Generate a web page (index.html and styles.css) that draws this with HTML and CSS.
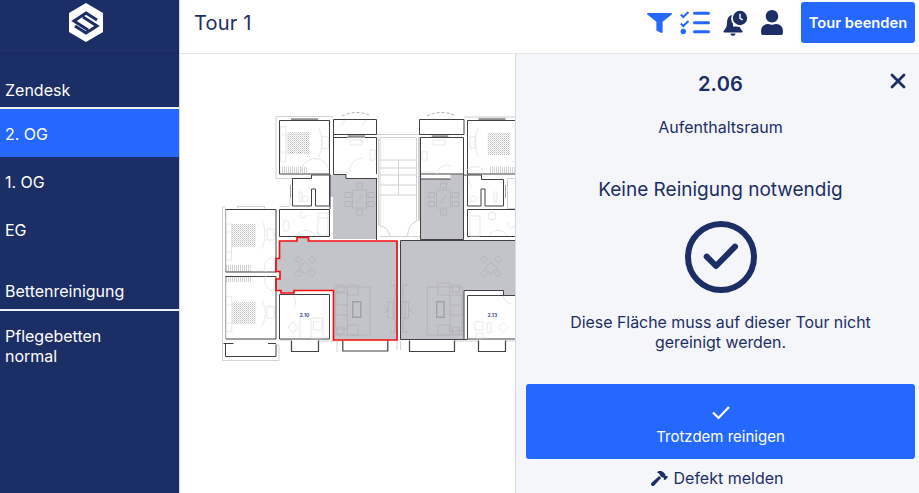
FILE: index.html
```html
<!DOCTYPE html>
<html lang="de">
<head>
<meta charset="utf-8">
<title>Tour 1</title>
<link rel="stylesheet" href="styles.css">
</head>
<body>
<div class="app">
  <aside class="sidebar">
    <div class="logo">
      <svg width="36" height="41" viewBox="0 0 36 41"><polygon fill="#fff" points="18,1 35,11 35,30 18,40 1,30 1,11"/><path fill="none" stroke="#1c2e66" stroke-width="3" d="M29 18 18 11 6 19 20 28M7 24 18 31 29 24 15 15"/></svg>
    </div>
    <div class="group-title">Zendesk</div>
    <div class="item active">2. OG</div>
    <div class="item">1. OG</div>
    <div class="item">EG</div>
    <div class="group-title second">Bettenreinigung</div>
    <div class="item two-line">Pflegebetten normal</div>
  </aside>
  <div class="main">
    <header class="topbar">
      <h1 class="title">Tour 1</h1>
      <div class="actions">
        <svg class="filter" width="25" height="20" viewBox="0 0 512 512" preserveAspectRatio="none"><path d="M487.976 0H24.028C2.710 0-8.047 25.866 7.058 40.971L192 225.941V432c0 7.831 3.821 15.170 10.237 19.662l80 55.980C298.020 518.690 320 507.493 320 487.980V225.941l184.947-184.970C520.021 25.896 509.338 0 487.976 0z"/></svg>
        <svg class="tasks" width="30" height="24" viewBox="0 0 30 24"><path class="ln" d="M.8 3.500 3.300 6 8.500 1M.8 12.500 3.300 15 8.500 10"/><circle class="dot" cx="3.300" cy="20.500" r="2.700"/><path class="bar" d="M14.500 2.300h14M14.500 11.800h14M14.500 20.800h14"/></svg>
        <svg class="bell" width="25" height="26" viewBox="0 0 25 26"><path d="M10 4.500c-4 .8-6 4-6 8 0 4-1 6-3.500 8.500-.5.800 0 1.500 1 1.500h17c1 0 1.500-.7 1-1.500-1.500-1.500-2.400-3-2.900-4.500H10z"/><path d="M7.500 23.500h5c0 1.400-1.100 2.300-2.500 2.300s-2.500-.9-2.500-2.300z"/><circle class="ring" cx="16.500" cy="8.500" r="8.400"/><circle cx="17" cy="8" r="7.200"/><path class="hand" d="M17 3.800v4.500l2.700 1.600"/></svg>
        <svg class="user" width="22" height="25" viewBox="0 0 448 512"><path d="M224 256c70.700 0 128-57.300 128-128S294.700 0 224 0 96 57.300 96 128s57.300 128 128 128zm89.600 32h-16.700c-22.200 10.200-46.900 16-72.900 16s-50.600-5.800-72.900-16h-16.700C60.200 288 0 348.200 0 422.400V464c0 26.500 21.500 48 48 48h352c26.500 0 48-21.500 48-48v-41.600c0-74.200-60.200-134.400-134.400-134.400z"/></svg>
        <button class="end-btn">Tour beenden</button>
      </div>
    </header>
    <div class="content">
      <div class="map">
        <svg class="plan" width="335" height="439" viewBox="180 54 335 439">
          <defs>
            <pattern id="hatch" width="2" height="2" patternUnits="userSpaceOnUse"><rect width="1" height="1" fill="#bdbdc0"/><rect x="1" y="1" width="1" height="1" fill="#dcdcde"/></pattern>
            <pattern id="stripes" width="2" height="4" patternUnits="userSpaceOnUse"><rect width="1" height="4" fill="#d2d2d5"/></pattern>
          </defs>
          <g class="fill-grey">
            <path d="M330 175h16v3h31v61h-44v-42h-3z"/>
            <path d="M420.500 179h30v-4.500h13.500v65h-43.500z"/>
            <path d="M279.500 241h17.500v-3.500h11.500v3.500h88.500v99h-63.500v-49.500h-39.500v2.500h-13v-2.500h-5v-11.500h4v-7.500h-4v-13h3.500z"/>
            <path d="M400.500 240.500h114.500v54.500h-11.500v-4.500h-39.500v49h-63.500z"/>
          </g>
          <g class="beds">
            <rect x="286.700" y="132.300" width="22.600" height="22"/><rect x="231.700" y="224" width="24" height="22.700"/><rect x="232.300" y="302.300" width="23.400" height="22"/><rect x="487.700" y="132.700" width="22.300" height="22.300"/>
          </g>
          <g class="stripes">
            <rect x="280.700" y="166.700" width="26" height="6.600"/><rect x="225.700" y="265" width="25" height="7"/><rect x="226" y="276.500" width="25" height="5.500"/><rect x="490" y="166.700" width="25" height="6.600"/>
          </g>
          <g class="wall-light">
            <path d="M276 178.500v-62h57M276 178.500h17M222.500 207v153.500h56.500v-15.500M222.500 207h3M237.500 206.500h27M279.500 206.500h10M237.500 206.500v2M264.500 206.500v2M290 198v8"/>
            <path d="M377 134.500h43M380 137.500h36.500M380 137.500v88.500M378.500 137.500v88.500M416.500 137.500v84M380 160h36.500M380 168h36.500M380 175h36.500M380 185h36.500M380 195h36.500M398.500 160v35M380 236.500h40M380 226q8 1 10 10M416.500 221q-8 3-9 15"/>
            <path d="M464 117h51M478.500 118h27M507.500 178.500v30M507.500 178.500h7.500M507.500 208.500h7.500"/>
            <path class="dash" d="M342 116q15-7 29 0M427 116q15-7 29 0"/>
            <path d="M337 340v12M387.500 341v10M397 341v9M400.500 341v9M454.500 341h24M505.500 341h9"/>
            <path d="M276 345h3M280 340h11M318.500 341h24"/>
          </g>
          <g class="wall-mid">
            <path d="M225.700 209v63M225.700 276v63M290.500 185v13M505.500 185v13M419 137v84"/>
          </g>
          <g class="bars">
            <path d="M291 119.500h27M478.500 119.500h27M347.700 136.500h17.300M431.700 136.500h16.600"/>
          </g>
          <g class="wall-dark">
            <path d="M279.500 120.500h50v53.500h-50z"/>
            <path d="M333.500 119.500h43v15h-43zM333.500 134.500v40h12.500v4h31M376.500 137.500v36.500M333.500 137.500h14M365 137.500h11.500"/>
            <path d="M292.500 178.500h19v-3.500h18M292.500 178.500v27.500h19v-17h4v17h14v-31"/>
            <path d="M279.500 209.500h50v27h-50zM330 174v35"/>
            <path d="M225.500 209.500h50.500v62.500h-50.500M276 272.500v-1M225.500 276.500h50.500v62.500h-50"/>
            <path d="M223.500 343.500h10M268 343.500h8M225.500 343.500v13h50.500v-12"/>
            <path class="thick" d="M291.500 340.500v11h27v-11M342.800 340.500v10.500h45v-10.500M409.500 340.500v11h45v-11M478.500 340.500v11h27v-11"/>
            <path d="M419.500 119.500h44.500v15h-44.500zM420.500 137.500h43v36.500h-43zM420.500 137.500v41.500h30M463.500 174v65.500M420.500 179v60.500M376.500 178v62"/>
            <path d="M464 175h17.500v4.500h22v26.500h-18.500v-17h-4v17h-13.500v-31"/>
            <path d="M467.500 120.500h47.500M467.500 120.500v53.500h47.500M467.500 209.500h47.500M467.500 209.500v27h47.500"/>
            <path d="M400.500 240.500h114.500M400.500 240.500v99h63.500v-49h39.500v4.500M467.500 295.500h47.500M467.500 295.500v43.500h47.500M464 339.500h3.500"/>
            <path d="M279.500 294.500h50v44.500h-50z"/>
            <path d="M420.500 239.500h43"/>
          </g>
          <path class="red" d="M279.500 241h17.500v-3.500h11.500v3.500h88.500v99h-63.500v-49.500h-39.500v2.500h-13v-2.500h-5v-11.500h4v-7.500h-4v-13h3.500z"/>
          <g class="furn">
            <path d="M280.500 126.700h5.300v35h-5.300zM280.500 135h5.300M280.500 152h5.300M321.700 136.700h6.600v11.600h-6.600zM319 128q6 14 0 29M301 174a11 11 0 0 1 28-3"/>
            <path d="M318 213h10v22h-10zM318 218h10M284 221q-2 5 0 10q5 2 5-5t-5-5zM303 212a3 3 0 1 0 3 3"/>
            <path d="M297 236a10 10 0 0 1 18 0"/>
            <path d="M226.500 224h5v36h-5zM226.500 232h5M226.500 252h5M267 229h7v11h-7zM262 221q6 12 0 28M267 306.700h7v11.600h-7zM262 300q7 14 0 26M226.500 296.700h5.300v35h-5.300zM226.500 305h5.300M226.500 323h5.300"/>
            <path d="M266 272a10 10 0 0 1 8-15M266 276a10 10 0 0 0 8 15"/>
            <path d="M350 140h12v5h-12zM370 150h5v10h-5zM334 172h14M349 172q2-14 14-14M345 120l-3 5M366 120l-3 5"/>
            <path d="M433 140h12v5h-12zM422 151.700h5v8.300h-5zM421 172h14M437 174a10 10 0 0 1 14-8"/>
            <path d="M470 136.700h5v11.600h-5zM478 128q-5 14 0 29M511.700 126.700h3.300v35h-3.300M464.500 173a12 12 0 0 1 19-3"/>
            <path d="M470 199a3 3 0 1 0 6 0a3 3 0 1 0-6 0M494 192h3v10h-3zM472 188q-3-7-4-8"/>
            <path d="M470 216h10v20h-10zM492 212a4 4 0 1 0 0 8a4 4 0 1 0 0-8M508 222a4 4 0 1 0 7 0"/>
            <path d="M489 236a10 10 0 0 1 18 0M302 199a3 3 0 1 0 6 0a3 3 0 1 0-6 0M299 192h3v10h-3z"/>
            <path d="M293 322l5 5-5 6-5-6zM313.500 321.700h8.400v8.300h-8.400zM311 318h12v20h-12zM300 312v26M294 296a12 12 0 0 1 0 12"/>
            <path d="M475 321.700h8v8.300h-8zM487 322.700h4v10h-4zM503 322.500l5 5-5 5-5-5zM476 333h7v5h-7zM503 296a11 11 0 0 0 9 8"/>
          </g>
          <g class="furn-grey">
            <path d="M352.500 190h14v18h-14zM345 192.500h6v5h-6zM345 201.500h6v5h-6zM368 192.500h6v5h-6zM368 201.500h6v5h-6zM356.500 183h6v5h-6zM356.500 210h6v5h-6zM356.500 203l6-8"/>
            <path d="M436.500 190h14v18h-14zM428.500 192.500h6v5h-6zM428.500 201.500h6v5h-6zM452.500 192.500h6v5h-6zM452.500 201.500h6v5h-6zM440.500 183h6v5h-6zM440.500 210h6v5h-6zM440.500 203l6-8"/>
            <path d="M305 262l6 6-6 6-6-6zM298.500 256l3.500 3.500-3.500 3.500-3.500-3.500zM312 256l3.500 3.500-3.500 3.500-3.500-3.500zM298.500 270l3.500 3.500-3.500 3.500-3.500-3.500zM312 270l3.500 3.500-3.500 3.500-3.500-3.500z"/>
            <path d="M491 262l6 6-6 6-6-6zM484.500 256l3.500 3.500-3.500 3.500-3.500-3.500zM498 256l3.500 3.500-3.500 3.500-3.500-3.500zM484.500 270l3.500 3.500-3.500 3.500-3.500-3.500zM498 270l3.500 3.500-3.500 3.500-3.500-3.500z"/>
            <path d="M335 287h35v48h-35zM335.700 293h11.600v36h-11.600zM335.700 305h11.600M335.700 315h11.600M347.300 285h10.700v10h-10.700zM347.300 325h10.700v10h-10.700zM337 285h7v7h-7zM337 327h7v7h-7z"/>
            <path class="heavy" d="M352.700 301.700h8v15.600h-8z"/>
            <path d="M427.300 287h35v48h-35zM450 295h11.700v36h-11.700zM450 305h11.700M450 315h11.700M437.700 283h12.300v12h-12.300zM437.700 325h12.300v10h-12.300zM452.500 285h7v7h-7zM452.500 327h7v7h-7z"/>
            <path class="heavy" d="M436.700 301.700h7.300v15.600h-7.300z"/>
            <path d="M390 285h5v15l-2 2v16l2 2v12h-5M408 285h-5v15l2 2v16l-2 2v12h5M388 302h7v16h-7zM402 302h6.500v16h-6.500zM383 306l5 4M383 314l5-4M414 306l-5 4M414 314l-5-4"/>
          </g>
          <text class="room-label" x="304.500" y="317">2.10</text>
          <text class="room-label" x="492.300" y="317">2.13</text>
        </svg>
      </div>
      <section class="panel">
        <div class="panel-top">
          <h2 class="room-no">2.06</h2>
          <svg class="close" width="16" height="16" viewBox="0 0 16 16"><path d="M2 2l12 12M14 2 2 14"/></svg>
        </div>
        <div class="room-name">Aufenthaltsraum</div>
        <div class="status">Keine Reinigung notwendig</div>
        <svg class="status-icon" width="74" height="74" viewBox="0 0 74 74"><circle cx="37" cy="37" r="33"/><path d="M22.700 36.700 32 46 51 26.700"/></svg>
        <p class="note">Diese Fläche muss auf dieser Tour nicht gereinigt werden.</p>
        <button class="clean-btn">
          <svg width="20" height="16" viewBox="0 0 20 16"><path d="M2 8.500 7.500 14 18 3"/></svg>
          <span>Trotzdem reinigen</span>
        </button>
        <div class="defect">
          <svg width="17" height="15" viewBox="0 0 576 512"><path d="M571.310 193.940l-22.630-22.630c-6.250-6.250-16.380-6.250-22.630 0l-11.310 11.310-28.900-28.900c5.630-21.310.360-44.900-16.350-61.610l-45.250-45.250c-62.480-62.480-163.790-62.480-226.280 0l90.510 45.250v18.750c0 16.970 6.740 33.250 18.750 45.250l49.140 49.140c16.710 16.710 40.300 21.980 61.610 16.350l28.900 28.900-11.310 11.310c-6.250 6.250-6.250 16.380 0 22.630l22.630 22.630c6.250 6.250 16.380 6.250 22.630 0l90.510-90.510c6.230-6.240 6.230-16.370-.020-22.620zm-286.720-15.200c-3.700-3.700-6.840-7.790-9.850-11.950L19.640 404.960c-25.570 23.880-26.260 64.190-1.530 88.930s65.050 24.050 88.930-1.530l238.130-255.070c-3.960-2.910-7.900-5.870-11.440-9.410l-49.140-49.140z"/></svg>
          <span>Defekt melden</span>
        </div>
      </section>
    </div>
  </div>
</div>
</body>
</html>
```
FILE: styles.css
```css
* { box-sizing: border-box; }
html, body { margin: 0; height: 100%; overflow: hidden; }
body { font-family: Inter, "Liberation Sans", sans-serif; color: #1c2e66; background: #fff; }
.app { display: flex; height: 493px; width: 919px; }

.sidebar { width: 180px; flex: none; background: #1c2e66; color: #fff; font-size: 16px; border-right: 1px solid #d5d9e4; }
.logo { height: 54px; display: flex; justify-content: center; padding: 2px 7px 0 0; border-bottom: 1px solid #182858; }
.group-title { height: 55px; padding: 27px 5px 0; line-height: 18px; border-bottom: 2px solid #eef0f5; }
.group-title.second { height: 56px; margin-top: 2px; padding-top: 27px; }
.item { height: 48px; padding: 2px 5px 0; display: flex; align-items: center; }
.item.active { background: #2468ff; }
.item.two-line { height: auto; padding-top: 15px; line-height: 20px; width: 130px; }

.main { flex: 1; display: flex; flex-direction: column; min-width: 0; }
.topbar { height: 54px; flex: none; display: flex; align-items: center; justify-content: space-between; padding: 0 4px 8px 14px; background: #fff; border-bottom: 1px solid #e6e7ea; }
.title { margin: 0; font-size: 20px; font-weight: 400; letter-spacing: .2px; }
.actions { display: flex; align-items: center; }
.filter { fill: #2468ff; margin-right: 8px; }
.tasks { margin-right: 13px; }
.tasks .ln { fill: none; stroke: #2468ff; stroke-width: 2; }
.tasks .dot { fill: #2468ff; }
.tasks .bar { fill: none; stroke: #2468ff; stroke-width: 3; stroke-linecap: round; }
.bell { fill: #1c2e66; margin-right: 13px; }
.bell .ring { fill: #fff; }
.bell .hand { fill: none; stroke: #fff; stroke-width: 1.400; }
.user { fill: #1c2e66; margin-right: 18px; }
.end-btn { width: 114px; height: 41px; border: 0; border-radius: 3px; background: #2468ff; color: #fff; font: 600 14.700px Inter, sans-serif; padding: 0; }

.content { flex: 1; display: flex; min-height: 0; }
.map { width: 335px; flex: none; background: #fff; }
.plan { display: block; }
.fill-grey path { fill: #c3c4c9; }
.beds rect { fill: url(#hatch); }
.stripes rect { fill: url(#stripes); }
.wall-light path { fill: none; stroke: #d2d2d5; stroke-width: 1; }
.wall-light .dash { stroke: #8d8d92; stroke-dasharray: 3 2; stroke-width: .7; }
.wall-mid path { fill: none; stroke: #a2a2a6; stroke-width: 1; }
.bars path { fill: none; stroke: #8f8f94; stroke-width: 2.500; }
.wall-dark path { fill: none; stroke: #404045; stroke-width: 1; }
.wall-dark .thick { stroke-width: 1.200; }
.red { fill: none; stroke: #f80d0d; stroke-width: 1.700; }
.furn path { fill: none; stroke: #e2e2e4; stroke-width: .8; }
.furn-grey path { fill: none; stroke: #b0b1b7; stroke-width: .8; }
.furn-grey .heavy { stroke: #a0a1a7; stroke-width: 1.400; }
.room-label { font-size: 5px; font-weight: 600; fill: #25367a; text-anchor: middle; font-family: Inter, sans-serif; }

.panel { flex: 1; min-width: 0; background: #f5f6f9; border-left: 1px solid #d5d9e4; display: flex; flex-direction: column; align-items: center; padding: 0 4px 0 10px; }
.panel-top { position: relative; width: 100%; height: 60px; display: flex; justify-content: center; align-items: flex-start; }
.room-no { margin: 18px 0 0; font-size: 20px; line-height: 24px; font-weight: 600; letter-spacing: .2px; }
.close { position: absolute; right: 9px; top: 19px; fill: none; stroke: #1c2e66; stroke-width: 2.800; stroke-linecap: round; }
.room-name { font-size: 16px; line-height: 18px; margin-top: 4px; }
.status { font-size: 19px; line-height: 24px; margin-top: 42px; }
.status-icon { margin-top: 18px; flex: none; fill: none; stroke: #1c2e66; }
.status-icon circle { stroke-width: 6; }
.status-icon path { stroke-width: 6; stroke-linecap: round; stroke-linejoin: round; }
.note { margin: 19px 0 0; font-size: 15.900px; line-height: 20px; text-align: center; width: 320px; }
.clean-btn { width: 100%; height: 75px; margin-top: 31px; flex: none; border: 0; border-radius: 3px; background: #2468ff; color: #fff; font: 400 15px Inter, sans-serif; display: flex; flex-direction: column; align-items: center; padding: 20px 0 0; gap: 7px; }
.clean-btn svg { fill: none; stroke: #fff; stroke-width: 2.200; }
.defect { display: flex; align-items: center; gap: 6px; margin-top: 9px; padding-right: 7px; font-size: 16px; line-height: 20px; }
.defect svg { fill: #1c2e66; }
```
